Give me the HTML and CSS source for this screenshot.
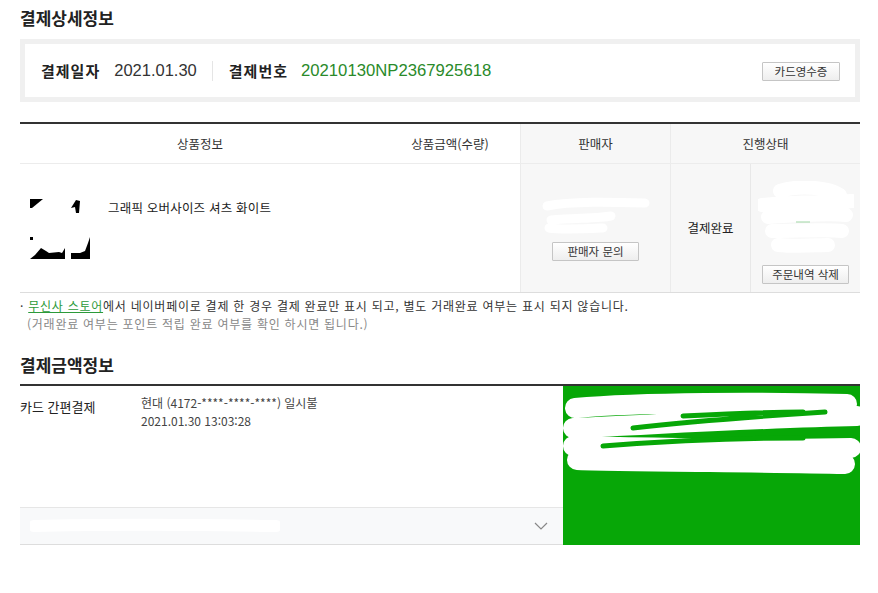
FILE: index.html
```html
<!DOCTYPE html>
<html lang="ko">
<head>
<meta charset="UTF-8">
<title>결제상세정보</title>
<link rel="stylesheet" href="styles.css">
</head>
<body>

<h2 class="tit">결제상세정보</h2>

<!-- 결제 요약 -->
<div class="summary">
  <div class="sum-item">
    <b>결제일자</b><span class="date">2021.01.30</span>
  </div>
  <div class="sum-item sum-no">
    <b>결제번호</b><span class="ordno">20210130NP2367925618</span>
  </div>
  <button class="btn btn-receipt">카드영수증</button>
</div>

<!-- 주문 상품 -->
<div class="order">
  <div class="th">상품정보</div>
  <div class="th">상품금액(수량)</div>
  <div class="th gray">판매자</div>
  <div class="th gray span2">진행상태</div>

  <div class="td prod">
    <svg class="thumb" width="70" height="70" viewBox="0 0 70 70">
      <rect width="70" height="70" fill="#fff"/>
      <polygon points="5,6 18,6 7,15 5,15" fill="#000"/>
      <polygon points="51,7 55,8 54,20 51,20 50,14 46,15" fill="#000"/>
      <polygon points="5,66 10,62 16,55 21,58 24,60 34,59 37,60 40,55 40,66" fill="#000"/>
      <polygon points="46,66 65,66 65,44 63,50 60,58 55,60 46,60" fill="#000"/>
      <rect x="5" y="44" width="3" height="3" fill="#000"/>
    </svg>
    <p class="pname">그래픽 오버사이즈 셔츠 화이트</p>
  </div>
  <div class="td price"></div>
  <div class="td gray seller">
    <svg width="110" height="40" viewBox="0 0 110 40">
      <path d="M6 10 C30 5 70 6 104 7 M10 24 C40 22 60 22 70 20 M8 32 C20 34 40 33 62 32" stroke="#fff" stroke-width="9" stroke-linecap="round" fill="none"/>
    </svg>
    <button class="btn">판매자 문의</button>
  </div>
  <div class="td gray state">결제완료</div>
  <div class="td gray state-btn">
    <svg width="96" height="80" viewBox="0 0 96 80">
      <path d="M22 10 C40 4 70 6 82 14 M4 24 C40 20 70 22 94 20 M10 36 C40 34 70 32 88 34 M14 50 C40 50 70 48 84 50 M20 64 C40 66 60 64 70 64" stroke="#fff" stroke-width="14" stroke-linecap="round" fill="none"/>
      <path d="M38 41 H52" stroke="#9fd6a4" stroke-width="1"/>
    </svg>
    <button class="btn">주문내역 삭제</button>
  </div>
</div>

<div class="notice">
  <p>·&nbsp;<a href="#">무신사 스토어</a>에서 네이버페이로 결제 한 경우 결제 완료만 표시 되고, 별도 거래완료 여부는 표시 되지 않습니다.</p>
  <p class="sub">(거래완료 여부는 포인트 적립 완료 여부를 확인 하시면 됩니다.)</p>
</div>

<h2 class="tit tit2">결제금액정보</h2>

<!-- 결제 금액 -->
<div class="pay">
  <div class="pay-left">
    <div class="pay-row">
      <span class="pay-type">카드 간편결제</span>
      <div class="pay-info">
        <p>현대 (4172-****-****-****) 일시불</p>
        <p>2021.01.30 13:03:28</p>
      </div>
    </div>
    <div class="pay-more">
      <svg width="250" height="16" viewBox="0 0 250 16">
        <path d="M4 8 C80 6 180 7 246 8" stroke="#fff" stroke-width="12" stroke-linecap="round" fill="none"/>
      </svg>
      <svg class="chev" width="14" height="8" viewBox="0 0 14 8">
        <path d="M1 1 L7 7 L13 1" stroke="#888" stroke-width="1.2" fill="none"/>
      </svg>
    </div>
  </div>
  <div class="pay-total">
    <svg width="297" height="159" viewBox="0 0 297 159">
      <path d="M12 22 C80 16 200 16 284 18 M10 42 C100 38 200 32 294 30 M10 60 C100 62 220 64 288 62 M14 74 C80 76 200 76 282 78" stroke="#fff" stroke-width="20" stroke-linecap="round" fill="none"/>
      <path d="M70 42 C140 34 200 30 262 26 M40 60 C120 54 200 52 240 52 M120 30 C160 28 200 26 240 26" stroke="#07a707" stroke-width="5" stroke-linecap="round" fill="none"/>
    </svg>
  </div>
</div>

</body>
</html>
```

FILE: styles.css
```css
*{margin:0;padding:0;box-sizing:border-box}
body{font-family:"Noto Sans CJK KR","Liberation Sans",sans-serif;font-size:12px;color:#333;background:#fff;padding:0 18px 0 20px}
.tit{font-size:17px;font-weight:700;color:#222;line-height:24px;padding-top:6px;height:39px}
.tit2{height:auto;padding-top:0;margin:20px 0 7px}

/* 요약 */
.summary{display:flex;align-items:center;height:63px;border:5px solid #f0f0f0;padding:0 15px 0 16px}
.sum-item{display:flex;align-items:center}
.sum-item b{font-size:15px;font-weight:700;color:#222;letter-spacing:1px}
.date{font-family:"Liberation Sans",sans-serif;font-size:16.5px;color:#333;margin-left:14px}
.sum-no{margin-left:15px;padding-left:16px;border-left:1px solid #e5e5e5;height:20px}
.ordno{font-family:"Liberation Sans",sans-serif;font-size:16.7px;color:#2a8a2a;margin-left:13px}
.btn-receipt{margin-left:auto;margin-top:2px}

.btn{width:87px;height:19px;border:1px solid #c5c5c5;border-radius:1px;background:linear-gradient(#fff,#eee);font-family:"Noto Sans CJK KR",sans-serif;font-size:11.5px;color:#333;cursor:pointer;line-height:17px}
.btn-receipt{width:78px}

/* 주문 */
.order{display:grid;grid-template-columns:360px 140px 150px 80px 110px;margin-top:20px;border-top:2px solid #333;border-bottom:1px solid #ddd}
.th{height:40px;display:flex;align-items:center;justify-content:center;font-size:12.5px;color:#333;border-bottom:1px solid #ececec}
.span2{grid-column:span 2}
.gray{background:#f7f7f7;border-left:1px solid #ebebeb}
.td{height:128px;display:flex;align-items:center}
.prod{align-items:flex-start;padding:29px 0 0 5px}
.thumb{display:block}
.pname{font-size:12.5px;color:#222;margin:5px 0 0 13px;letter-spacing:.2px}
.seller,.state-btn{flex-direction:column;justify-content:center}
.seller svg{margin-bottom:6px}
.state{justify-content:center;font-size:12.5px;color:#222;padding-bottom:2px}
.state-btn{border-left:1px solid #e8e8e8;padding-top:8px}
.state-btn svg{margin-bottom:4px}

/* 안내 */
.notice{margin-top:4px;line-height:18px;font-size:12px;color:#333;letter-spacing:.75px}
.notice a{color:#2c9a3a;text-decoration:underline}
.notice .sub{color:#888;padding-left:7px}

/* 결제금액 */
.pay{display:flex;border-top:2px solid #333}
.pay-left{width:543px;display:flex;flex-direction:column}
.pay-row{display:flex;height:121px;padding-top:8px}
.pay-type{width:121px;font-size:13px;color:#222;line-height:22px;padding-top:2px}
.pay-info p{font-size:12px;color:#444;line-height:18px}
.pay-more{height:38px;display:flex;align-items:center;justify-content:space-between;background:#f8f9fa;border-top:1px solid #e6e6e6;border-bottom:1px solid #ddd;padding:0 15px 0 10px}
.pay-total{width:297px;height:159px;background:#07a707}
.pay-total svg{display:block}
```
